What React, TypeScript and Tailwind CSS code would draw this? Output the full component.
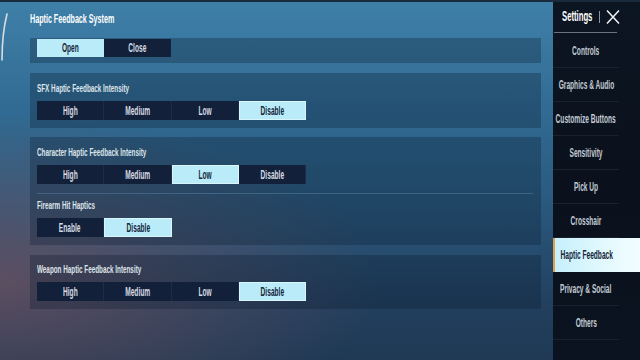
import React from "react";

const FONT = "font-['Liberation_Sans',Arial,sans-serif] font-bold";

function Txt({ children, className = "", origin = "origin-center" }: { children: React.ReactNode; className?: string; origin?: string }) {
  return (
    <span className={`inline-block whitespace-nowrap scale-x-[0.55] ${origin} ${className}`}>{children}</span>
  );
}

function Seg({ options, active }: { options: string[]; active: number }) {
  return (
    <div className="flex h-[19px]">
      {options.map((o, i) => (
        <div
          key={o}
          className={`w-[67.3px] h-full flex items-center justify-center text-[12px] ${
            i === active
              ? "bg-[#b9ebf8] text-[#16263a] border border-[#d9f6fd]"
              : "bg-[#13203a] text-[#d6dce3] border-r border-[#1d2d47]"
          }`}
        >
          <Txt>{o}</Txt>
        </div>
      ))}
    </div>
  );
}

function Label({ children }: { children: React.ReactNode }) {
  return (
    <div className="h-[15px] leading-[15px] text-[11.5px] text-[#dde4ea]">
      <Txt origin="origin-left">{children}</Txt>
    </div>
  );
}

const sideItems = [
  "Controls",
  "Graphics & Audio",
  "Customize Buttons",
  "Sensitivity",
  "Pick Up",
  "Crosshair",
  "Haptic Feedback",
  "Privacy & Social",
  "Others",
];

export default function App() {
  return (
    <div
      className={`${FONT} relative w-[640px] h-[360px] overflow-hidden flex bg-[radial-gradient(ellipse_at_0%_78%,rgba(130,85,95,0.6),transparent_42%),linear-gradient(180deg,#3e80a8_0%,#3a78a0_12%,#316b93_30%,#2a5a7f_55%,#223f5e_85%,#1f3954_100%)]`}
    >
      {/* top dark edge */}
      <div className="absolute left-0 top-0 w-full h-[2px] bg-[#1a2b3d]" />
      {/* left bracket decoration */}
      <svg className="absolute left-0 top-[12px]" width="10" height="52" viewBox="0 0 10 52">
        <path d="M7 2 C4 14 2 26 2 48" stroke="#d9dde2" strokeWidth="1.6" fill="none" strokeLinecap="round" />
      </svg>

      {/* main column */}
      <div className="w-[553px] h-full pl-[30px] pr-[12px] flex flex-col">
        <div className="h-[38px] flex items-center text-[13px] text-white">
          <Txt origin="origin-left">Haptic Feedback System</Txt>
        </div>

        {/* panel 1 */}
        <div className="h-[25px] pt-[1px] pl-[7px] bg-[#0a1a2e]/30">
          <div className="flex h-[18px]">
            <div className="w-[67px] h-full flex items-center justify-center text-[12px] bg-[#b9ebf8] text-[#16263a]">
              <Txt>Open</Txt>
            </div>
            <div className="w-[67px] h-full flex items-center justify-center text-[12px] bg-[#13203a] text-[#d6dce3]">
              <Txt>Close</Txt>
            </div>
          </div>
        </div>

        {/* panel 2 */}
        <div className="mt-[10px] pt-[8px] pb-[8px] pl-[7px] bg-[#0a1a2e]/30">
          <Label>SFX Haptic Feedback Intensity</Label>
          <div className="mt-[5px]">
            <Seg options={["High", "Medium", "Low", "Disable"]} active={3} />
          </div>
        </div>

        {/* panel 3 */}
        <div className="mt-[9px] pt-[8px] pb-[8px] pl-[7px] pr-[8px] bg-[#0a1a2e]/30">
          <Label>Character Haptic Feedback Intensity</Label>
          <div className="mt-[5px]">
            <Seg options={["High", "Medium", "Low", "Disable"]} active={2} />
          </div>
          <div className="mt-[9px] h-px bg-[#4a7090]/70" />
          <div className="mt-[4px]">
            <Label>Firearm Hit Haptics</Label>
          </div>
          <div className="mt-[5px]">
            <Seg options={["Enable", "Disable"]} active={1} />
          </div>
        </div>

        {/* panel 4 */}
        <div className="mt-[10px] pt-[7px] pb-[8px] pl-[7px] bg-[#0a1a2e]/30">
          <Label>Weapon Haptic Feedback Intensity</Label>
          <div className="mt-[5px]">
            <Seg options={["High", "Medium", "Low", "Disable"]} active={3} />
          </div>
        </div>
      </div>

      {/* sidebar */}
      <div className="w-[87px] h-full bg-[linear-gradient(180deg,#0c1522_0%,#0a111c_50%,#0b1320_100%)] flex flex-col">
        <div className="h-[34px] relative">
          <div className="h-[33px] flex items-center pl-[9px] gap-[3px]">
            <div className="w-[34px] text-[14px] text-white">
              <Txt origin="origin-left">Settings</Txt>
            </div>
            <div className="w-px h-[12px] bg-[#8c96a2]" />
            <svg width="16" height="16" viewBox="0 0 16 16" className="ml-[2px]">
              <path d="M2 1.5 L14 14.5 M14 1.5 L2 14.5" stroke="#f2f4f6" strokeWidth="1.5" fill="none" />
            </svg>
          </div>
          <div className="absolute left-[1px] bottom-[1px] w-[63px] h-px bg-[#6a7380]" />
        </div>
        {sideItems.map((s) => {
          const active = s === "Haptic Feedback";
          return active ? (
            <div
              key={s}
              className="h-[34px] w-full flex items-center border-l-2 border-[#e0a050] bg-[linear-gradient(90deg,#c6f0fb_0%,#e3f9fe_60%,#f2fdff_100%)] text-[#14243a] text-[12px]"
            >
              <div className="w-[64px] flex justify-center">
                <Txt>{s}</Txt>
              </div>
            </div>
          ) : (
            <div key={s} className="h-[34px] w-[66px] flex items-center justify-center text-[12px] text-[#c3cbd4] border-b border-[#18212d]">
              <Txt>{s}</Txt>
            </div>
          );
        })}
      </div>
    </div>
  );
}
